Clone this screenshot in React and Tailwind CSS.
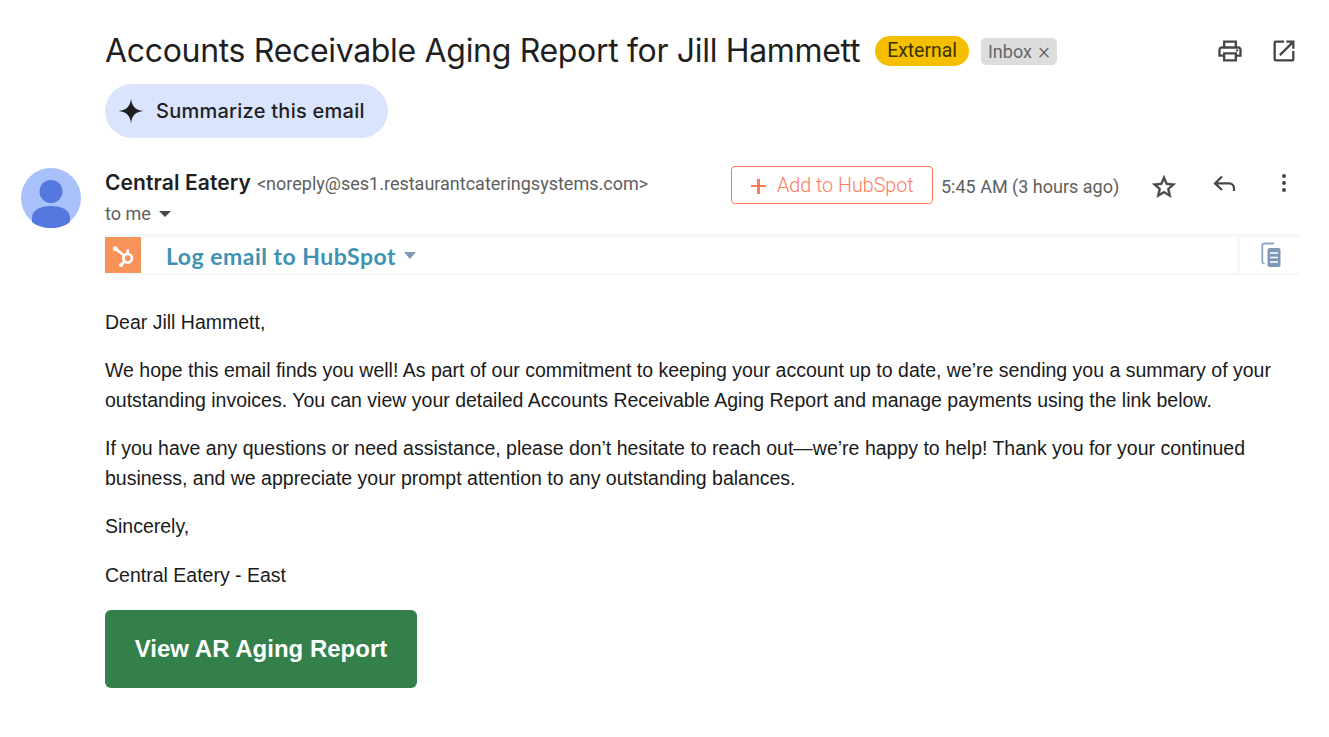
import React from 'react';

// --- ICONS ---
const PrintIcon = () => (
    <svg viewBox="0 0 24 24" className="w-[28px] h-[28px] fill-[#444746]">
        <path d="M19 8h-1V3H6v5H5c-1.66 0-3 1.34-3 3v6h4v4h12v-4h4v-6c0-1.66-1.34-3-3-3zM8 5h8v3H8V5zm8 12v2H8v-4h8v2zm2-2v-2H6v2H4v-4c0-.55.45-1 1-1h14c.55 0 1 .45 1 1v4h-2z" />
        <circle cx="18" cy="11.5" r="1" />
    </svg>
);

const OpenIcon = () => (
    <svg viewBox="0 0 24 24" className="w-[28px] h-[28px] fill-[#444746]">
        <path d="M19 19H5V5h7V3H5a2 2 0 0 0-2 2v14a2 2 0 0 0 2 2h14c1.1 0 2-.9 2-2v-7h-2v7zM14 3v2h3.59l-9.83 9.83 1.41 1.41L19 6.41V10h2V3h-7z" />
    </svg>
);

const Sparkle = () => (
    <svg viewBox="0 0 26 26" className="w-[26px] h-[26px] fill-[#1f1f1f]">
        <path d="M13 0.5C13.8 8 17 12.2 25.5 13C17 13.8 13.8 18 13 25.5C12.2 18 9 13.8 0.5 13C9 12.2 12.2 8 13 0.5Z" />
    </svg>
);

const Avatar = () => (
    <svg viewBox="0 0 60 60" className="w-[60px] h-[60px] shrink-0">
        <circle cx="30" cy="30" r="30" fill="#a8c1fb" />
        <circle cx="30" cy="23.5" r="11.5" fill="#5578e0" />
        <path d="M11 54V50C11 42 19 38 30 38C41 38 49 42 49 50V54C44 58 37 60 30 60C23 60 16 58 11 54Z" fill="#5578e0" />
    </svg>
);

const Sprocket = () => (
    <svg viewBox="0 0 36 36" className="w-[36px] h-[36px]">
        <rect width="36" height="36" fill="#f79259" />
        <g stroke="#fff" strokeWidth="2.7" fill="none">
            <circle cx="22.700" cy="21.300" r="4.300" />
            <path d="M22.700 17V12.500M19.300 18.500L10.300 11.700M19.500 24.500L16 28" />
        </g>
        <circle cx="10.300" cy="11.700" r="2.500" fill="#fff" />
        <circle cx="16" cy="28" r="2" fill="#fff" />
    </svg>
);

const StarIcon = () => (
    <svg viewBox="0 0 24 24" className="w-[28px] h-[28px] fill-[#444746] stroke-[#444746] stroke-[0.4]">
        <path d="M22 9.24l-7.19-.62L12 2 9.19 8.63 2 9.24l5.46 4.73L5.82 21 12 17.27 18.18 21l-1.63-7.03L22 9.24zM12 15.4l-3.76 2.27 1-4.28-3.32-2.88 4.38-.38L12 6.1l1.71 4.04 4.38.38-3.32 2.88 1 4.28L12 15.4z" />
    </svg>
);

const ReplyIcon = () => (
    <svg viewBox="0 0 24 24" className="w-[24px] h-[24px] fill-none stroke-[#444746] stroke-[2.2]">
        <path d="M10 6.500L3 13.400L10 20" />
        <path d="M3 13.400H17C20 13.400 22 15.500 22 18.500V21" />
    </svg>
);

const MoreIcon = () => (
    <svg viewBox="0 0 24 24" className="w-[24px] h-[24px] fill-[#444746]">
        <circle cx="12" cy="5" r="2" />
        <circle cx="12" cy="12" r="2" />
        <circle cx="12" cy="19" r="2" />
    </svg>
);

const CopyIcon = () => (
    <svg viewBox="0 0 20 26" className="w-[20px] h-[26px]">
        <path d="M13 1.500H3.500C2 1.500 1.300 2.200 1.300 3.700V19C1.300 20.500 2 21.500 3.500 21.500" fill="none" stroke="#8fa8c2" strokeWidth="1.800" />
        <rect x="6.500" y="6" width="13" height="19" rx="2" fill="#7c98b6" />
        <path d="M9 11H17M9 15.500H17M9 20H17" stroke="#fff" strokeWidth="1.500" />
    </svg>
);

// --- HELPER COMPONENTS ---
const Para = ({ children, className = '' }) => <p className={`text-[19.5px] leading-[30px] text-[#1a1a1a] ${className}`}>{children}</p>;

const TitleRow = () => (
    <div className="flex items-center pl-[105px] pr-[31px] h-[38px] mt-[32px]">
        <h1 className="font-['Inter',sans-serif] text-[32px] leading-[38px] text-[#1f1f1f] tracking-[-0.32px] whitespace-nowrap">Accounts Receivable Aging Report for Jill Hammett</h1>
        <span className="ml-[15px] h-[30px] px-[12px] flex items-center rounded-full bg-[#f4bf00] text-[#3c3200] text-[19.4px] font-['Roboto',sans-serif]">External</span>
        <span className="ml-[12px] h-[27px] pl-[7px] pr-[7px] flex items-center gap-[6px] rounded-[5px] bg-[#dddddd] text-[#666666] text-[18px] font-['Roboto',sans-serif]">Inbox <span className="text-[23px] font-light leading-none">×</span></span>
        <div className="ml-auto flex items-center gap-[26px]">
            <PrintIcon />
            <OpenIcon />
        </div>
    </div>
);

const SummarizeButton = () => (
    <div className="pl-[105px] mt-[14px]">
        <div className="inline-flex items-center w-[283px] h-[54px] pl-[13px] rounded-[27px] bg-[#dbe4fd] gap-[12px]">
            <Sparkle />
            <span className="font-['Inter',sans-serif] font-medium text-[20px] text-[#1f1f1f] tracking-[0.25px]">Summarize this email</span>
        </div>
    </div>
);

const SenderRow = () => (
    <div className="flex pl-[21px] pr-[30px] mt-[30px]">
        <Avatar />
        <div className="ml-[24px] flex-1">
            <div className="flex items-start h-[66px]">
                <div className="-mt-[1px]">
                    <div className="flex items-baseline h-[26px]">
                        <span className="font-['Inter',sans-serif] font-semibold text-[21px] text-[#1f1f1f] tracking-[0.1px]">Central Eatery</span>
                        <span className="ml-[6px] font-['Roboto',sans-serif] text-[18px] text-[#5e5e5e]">&lt;noreply@ses1.restaurantcateringsystems.com&gt;</span>
                    </div>
                    <div className="flex items-center gap-[8px] mt-[7px] font-['Roboto',sans-serif] text-[18px] text-[#5e5e5e]">
                        to me
                        <span className="w-0 h-0 border-x-[6px] border-x-transparent border-t-[6px] border-t-[#444746]" />
                    </div>
                </div>
                <div className="ml-auto flex items-start">
                    <div className="flex items-center h-[38px] w-[202px] -mt-[2px] pl-[19px] pt-[2px] gap-[11px] rounded-[4px] border border-[#ff7a59] text-[#ff7a59] font-['Roboto',sans-serif] text-[19.7px] font-light">
                        <span className="relative w-[15px] h-[15px] flex items-center justify-center">
                            <span className="block w-[15px] h-[2.5px] bg-[#ff7a59]" />
                            <span className="absolute w-[2.5px] h-[15px] bg-[#ff7a59]" />
                        </span>
                        Add to HubSpot
                    </div>
                    <span className="ml-[8px] mt-[5px] font-['Roboto',sans-serif] text-[18px] text-[#5e5e5e] w-[209px] whitespace-nowrap">5:45 AM (3 hours ago)</span>
                    <div className="mt-[5px]"><StarIcon /></div>
                    <div className="ml-[34px] mt-[2px]"><ReplyIcon /></div>
                    <div className="ml-[36px] mr-[3px] mt-[3px]"><MoreIcon /></div>
                </div>
            </div>
            <div className="flex items-center h-[41px] border-t-[3px] border-b-[2px] border-y-[#f5f8fa]">
                <Sprocket />
                <span className="ml-[25px] pt-[2px] font-['Lato',sans-serif] font-bold text-[23px] tracking-[0.5px] text-[#3e92b2]">Log email to HubSpot</span>
                <span className="ml-[8px] w-0 h-0 border-x-[6px] border-x-transparent border-t-[7px] border-t-[#7c98b6]" />
                <div className="ml-auto w-[62px] h-full flex items-center pl-[21px] border-l-[3px] border-l-[#f5f8fa]">
                    <CopyIcon />
                </div>
            </div>
        </div>
    </div>
);

const Body = () => (
    <div className="pl-[105px] mt-[32px] font-['Liberation_Sans',sans-serif] w-[1299px]">
        <Para>Dear Jill Hammett,</Para>
        <Para className="mt-[18px]">We hope this email finds you well! As part of our commitment to keeping your account up to date, we’re sending you a summary of your outstanding invoices. You can view your detailed Accounts Receivable Aging Report and manage payments using the link below.</Para>
        <Para className="mt-[18px]">If you have any questions or need assistance, please don’t hesitate to reach out—we’re happy to help! Thank you for your continued business, and we appreciate your prompt attention to any outstanding balances.</Para>
        <Para className="mt-[18px]">Sincerely,</Para>
        <Para className="mt-[19px]">Central Eatery - East</Para>
        <div className="mt-[20px] flex items-center justify-center w-[312px] h-[78px] rounded-[6px] bg-[#34804b] text-white font-bold text-[24px]">View AR Aging Report</div>
    </div>
);

// --- MAIN APP COMPONENT ---
export default function App() {
    return (
        <div className="bg-white h-[737px] w-[1329px] overflow-hidden">
            <TitleRow />
            <SummarizeButton />
            <SenderRow />
            <Body />
        </div>
    );
}
